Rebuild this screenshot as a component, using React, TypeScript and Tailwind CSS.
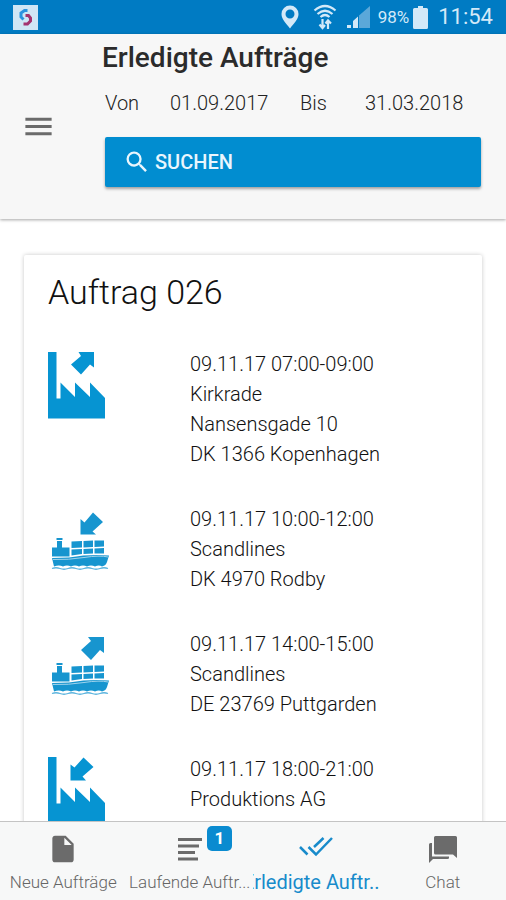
import React from "react";
import { MdInsertDriveFile, MdMenu, MdSearch } from "react-icons/md";

type Stop = {
  id: number;
  place: "factory" | "ship";
  direction: "in" | "out";
  lines: string[];
};

const stops: Stop[] = [
  {
    id: 1,
    place: "factory",
    direction: "out",
    lines: ["09.11.17 07:00-09:00", "Kirkrade", "Nansensgade 10", "DK 1366 Kopenhagen"],
  },
  {
    id: 2,
    place: "ship",
    direction: "in",
    lines: ["09.11.17 10:00-12:00", "Scandlines", "DK 4970 Rodby"],
  },
  {
    id: 3,
    place: "ship",
    direction: "out",
    lines: ["09.11.17 14:00-15:00", "Scandlines", "DE 23769 Puttgarden"],
  },
  {
    id: 4,
    place: "factory",
    direction: "in",
    lines: ["09.11.17 18:00-21:00", "Produktions AG"],
  },
];

const FactoryIcon = ({ direction }: { direction: Stop["direction"] }) => (
  <svg viewBox="0 0 60 68" className="mt-[3px] h-[68px] w-[60px] fill-[#0694d2]" aria-hidden="true">
    <path d="M0 0H8.500V46.500H12.500V30.500L27 45V30.500L42 45V30.500L57 46V66.500H0Z" />
    {direction === "out" ? (
      <path d="M30.500 0H46V15.500L42 12.500L33 22.500L23 12.500L33 4Z" />
    ) : (
      <path d="M35.500 0.500L45.500 10L34.500 19.500L38 23.500H22.500V7.500L26.500 10.500Z" />
    )}
  </svg>
);

const ShipIcon = ({ direction }: { direction: Stop["direction"] }) => (
  <svg viewBox="0 0 62 60" className="mt-2 h-[60px] w-[62px] fill-[#1795cf]" aria-hidden="true">
    {direction === "out" ? (
      <path d="M40 0H56V16L52 13L43 23L33 13L43 4Z" />
    ) : (
      <path d="M45 0.500L55 10L44.500 19.500L48 22.500H32.500V7L36.500 10.500Z" />
    )}
    <path d="M8.500 26H14.500V28H8.500ZM9 29H14V35.500H21.500V44.500H4V35.500H9Z" />
    <path d="M23.500 29.500L34 29V35.500L23.500 36ZM35.500 29L45 28.500V35L35.500 35.500ZM46.500 28.500L56 28.500V34.500L46.500 35ZM23.500 37.500L34 37V42L23.500 43.500ZM35.500 37L45 36.500V41.500L35.500 42ZM46.500 36.500L56 36V41.500H46.500Z" />
    <path d="M4 46L21 45.500Q42 42 61 43.500L59 50Q58 53.500 54 54.500Q51 52.500 47 54.500Q43 52.500 39 54.500Q35 52.500 31 54.500Q27 52.500 23 54.500Q19 52.500 15 54.500Q11 52.500 6 54.500Z" />
    <path
      d="M4 56.500Q8 55 12 56.500T20 56.500T28 56.500T36 56.500T44 56.500T52 56.500T60 56.500"
      fill="none"
      stroke="#5cb4de"
      strokeWidth="1.300"
    />
    <path d="M5 47.500Q20 48 36 45.500T60 45" fill="none" stroke="#9fd3ec" strokeWidth="1" />
  </svg>
);

const StatusBar = () => (
  <div className="flex h-[34px] shrink-0 items-center bg-[#007bc3] px-[13px] text-[#d3e9f8]">
    <svg viewBox="0 0 25 25" className="size-[25px]" aria-hidden="true">
      <rect width="25" height="25" fill="#cfe6f5" />
      <path d="M14.500 5.500H11.500L8 8V12L10.500 14.500" fill="none" stroke="#2b93e0" strokeWidth="3" />
      <path d="M12.500 10.500H15.500L17.500 13V16L14.500 19H10.500" fill="none" stroke="#a3336f" strokeWidth="3" />
    </svg>
    <div className="ml-auto flex items-center">
      <svg viewBox="0 0 18 24" className="h-6 w-[18px] fill-current" aria-hidden="true">
        <path
          fillRule="evenodd"
          d="M9 0.500A8.500 8.500 0 0 0 0.500 9C0.500 14.500 5 18 9 23.500C13 18 17.500 14.500 17.500 9A8.500 8.500 0 0 0 9 0.500ZM9 4.500A4.500 4.500 0 1 1 9 13.500A4.500 4.500 0 0 1 9 4.500Z"
        />
      </svg>
      <svg viewBox="0 0 24 26" className="ml-[14px] h-[26px] w-6" fill="none" stroke="currentColor" strokeWidth="2.200" aria-hidden="true">
        <path d="M1.500 6.500Q12 -2.500 22.500 6.500M4.500 10Q12 3.500 19.500 10M7.500 13Q12 9 16.500 13" />
        <path d="M9.500 15V23M6.500 20.500L9.500 24L12 21M15 25V17M12.500 19.500L15 16.500L18 19.500" />
      </svg>
      <svg viewBox="0 0 23 22" className="ml-[10px] h-[22px] w-[23px]" aria-hidden="true">
        <path d="M12 9.500L23 0V22H12Z" fill="#5ba8d9" />
        <path d="M0 19H4V22H0ZM6 15L11 10.500V22H6Z" fill="#d3e9f8" />
      </svg>
      <span className="ml-2 text-[17px] leading-5">98%</span>
      <svg viewBox="0 0 15 23" className="ml-1 h-[23px] w-[15px] fill-current" aria-hidden="true">
        <path d="M5 0H10V2H13.500Q15 2 15 3.500V21.500Q15 23 13.500 23H1.500Q0 23 0 21.500V3.500Q0 2 1.500 2H5Z" />
      </svg>
      <span className="ml-[10px] text-[22px] leading-6">11:54</span>
    </div>
  </div>
);

const Header = () => (
  <header className="relative z-10 flex shrink-0 items-center bg-[#f7f7f7] pb-8 pr-[25px] shadow-[0_1px_3px_rgba(0,0,0,0.35)]">
    <button type="button" aria-label="Menü" className="ml-[21px] mt-8 text-[#6b6b6b]">
      <MdMenu className="size-[35px]" />
    </button>
    <div className="ml-[49px] flex-1">
      <h1 className="-ml-[3px] mt-2 text-[28px] font-medium leading-8 text-[#2b2b2b]">Erledigte Aufträge</h1>
      <div className="mt-[14px] flex text-[20px] font-light leading-[30px] text-[#222]">
        <span className="w-[65px]">Von</span>
        <time className="w-[130px]">01.09.2017</time>
        <span className="w-[65px]">Bis</span>
        <time>31.03.2018</time>
      </div>
      <button
        type="button"
        className="mt-[19px] flex h-[50px] w-full items-center rounded-[2px] bg-[#018dd0] pl-[18px] text-[20px] font-medium text-[#eaf6fd] shadow-[0_2px_3px_rgba(0,0,0,0.35)]"
      >
        <MdSearch className="mr-1 size-[28px]" />
        SUCHEN
      </button>
    </div>
  </header>
);

const OrderCard = () => (
  <section className="mx-6 mt-9 rounded-[2px] bg-white px-6 pt-[17px] shadow-[0_0_4px_rgba(0,0,0,0.22)]">
    <h2 className="text-[34px] font-light leading-10 text-[#111]">Auftrag 026</h2>
    <ul className="mt-[37px] flex flex-col gap-[35px] pb-10">
      {stops.map(({ id, place, direction, lines }) => (
        <li key={id} className="flex">
          <div className="w-[142px] shrink-0">
            {place === "factory" ? <FactoryIcon direction={direction} /> : <ShipIcon direction={direction} />}
          </div>
          <div className="text-[20px] font-light leading-[30px] text-[#111]">
            {lines.map((line) => (
              <p key={line}>{line}</p>
            ))}
          </div>
        </li>
      ))}
    </ul>
  </section>
);

const TabBar = () => (
  <nav className="relative z-10 grid h-[79px] shrink-0 grid-cols-4 border-t border-[#c4c4c4] bg-[#f7f8f8] text-[17px] font-light leading-6 text-[#666]">
    <a href="#neu" className="flex flex-col items-center pt-[11px]">
      <MdInsertDriveFile className="size-8 text-[#6b6b6b]" />
      <span className="mt-[5px] whitespace-nowrap">Neue Aufträge</span>
    </a>
    <a href="#laufend" className="relative flex flex-col items-center pt-[11px]">
      <svg viewBox="0 0 24 32" className="h-8 w-6 fill-[#6b6b6b]" aria-hidden="true">
        <path d="M0 5H24V8H0ZM0 11.500H21V14.500H0ZM0 18H17V21H0ZM0 24.500H20V27.500H0Z" />
      </svg>
      <span className="absolute left-20 top-1 rounded-[5px] bg-[#0a8bd0] px-2 text-[17px] font-bold leading-[25px] text-white">
        1
      </span>
      <span className="mt-[5px] whitespace-nowrap">Laufende Auftr...</span>
    </a>
    {/* the active label is larger than its tab and runs out on the left */}
    <a href="#erledigt" className="flex flex-col items-center overflow-hidden pt-[11px] font-normal text-[#188bcb]">
      <svg viewBox="0 0 34 32" className="h-8 w-[34px]" fill="none" stroke="currentColor" strokeWidth="2.500" aria-hidden="true">
        <path d="M1 14L8.500 21.500M9.500 14L17 21.500L33 5M15 14L24.500 5" />
      </svg>
      <span className="mt-[5px] self-end whitespace-nowrap text-[20px]">Erledigte Auftr..</span>
    </a>
    <a href="#chat" className="flex flex-col items-center pt-[11px]">
      <svg viewBox="0 0 28 32" className="h-8 w-7 fill-[#6b6b6b]" aria-hidden="true">
        <path d="M6.500 3H26.500Q28 3 28 4.500V25L24 21.500H6.500Q5 21.500 5 20V4.500Q5 3 6.500 3Z" />
        <path d="M1.500 10H3V23.500H20V25Q20 26 18.500 26H4L0 30V11.500Q0 10 1.500 10Z" />
      </svg>
      <span className="mt-[5px]">Chat</span>
    </a>
  </nav>
);

const App = () => {
  return (
    <div className="flex h-screen flex-col overflow-hidden bg-white font-[Roboto,sans-serif]">
      <StatusBar />
      <Header />
      <main className="min-h-0 flex-1 overflow-hidden">
        <OrderCard />
      </main>
      <TabBar />
    </div>
  );
};

export default App;
